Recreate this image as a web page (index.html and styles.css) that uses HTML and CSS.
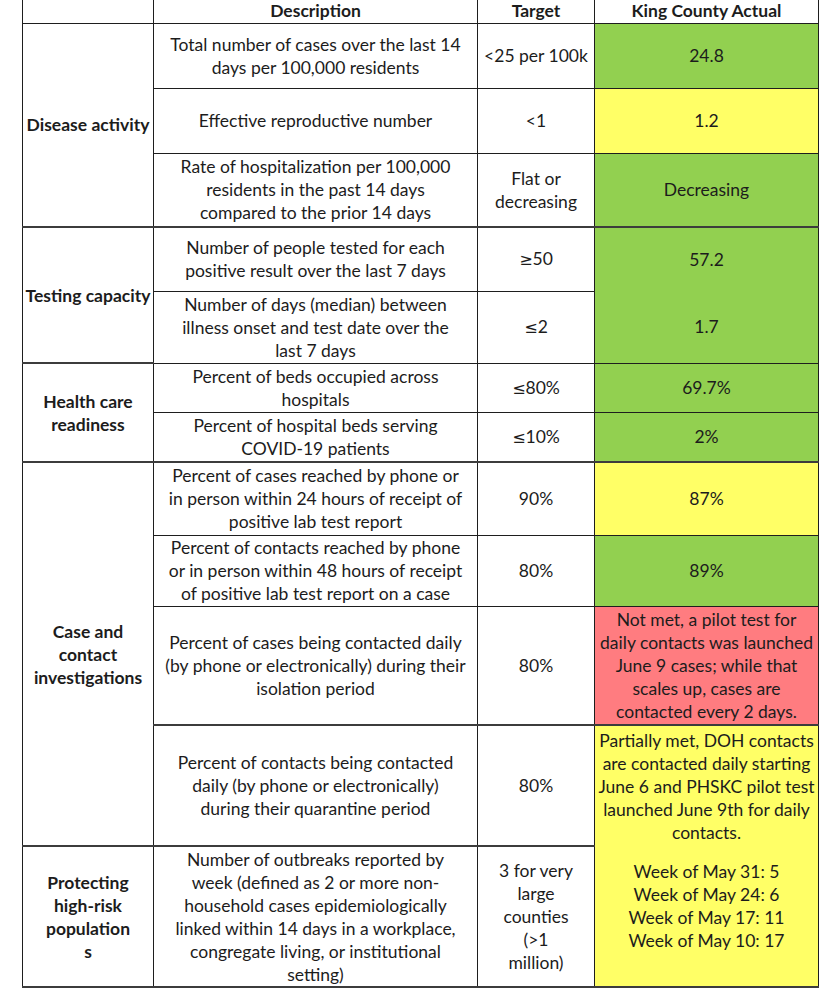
FILE: index.html
```html
<!DOCTYPE html>
<html>
<head>
<meta charset="utf-8">
<link rel="stylesheet" href="styles.css">
</head>
<body>
<table class="grid">
  <colgroup>
    <col class="c1"><col class="c2"><col class="c3"><col class="c4">
  </colgroup>
  <tr class="h-head">
    <th class="top"></th>
    <th class="top">Description</th>
    <th class="top">Target</th>
    <th class="top">King County Actual</th>
  </tr>
  <tr class="h65">
    <td class="cat grp" rowspan="3">Disease activity</td>
    <td>Total number of cases over the last 14<br>days per 100,000 residents</td>
    <td>&lt;25 per 100k</td>
    <td class="green">24.8</td>
  </tr>
  <tr class="h65">
    <td>Effective reproductive number</td>
    <td>&lt;1</td>
    <td class="yellow">1.2</td>
  </tr>
  <tr class="h74 grp">
    <td>Rate of hospitalization per 100,000<br>residents in the past 14 days<br>compared to the prior 14 days</td>
    <td>Flat or<br>decreasing</td>
    <td class="green">Decreasing</td>
  </tr>
  <tr class="h64">
    <td class="cat grp" rowspan="2">Testing capacity</td>
    <td>Number of people tested for each<br>positive result over the last 7 days</td>
    <td><span class="sym">&ge;</span>50</td>
    <td class="green nob">57.2</td>
  </tr>
  <tr class="h72">
    <td>Number of days (median) between<br>illness onset and test date over the<br>last 7 days</td>
    <td><span class="sym">&le;</span>2</td>
    <td class="green">1.7</td>
  </tr>
  <tr class="h49">
    <td class="cat grp" rowspan="2">Health care<br>readiness</td>
    <td>Percent of beds occupied across<br>hospitals</td>
    <td><span class="sym">&le;</span>80%</td>
    <td class="green">69.7%</td>
  </tr>
  <tr class="h50 grp">
    <td>Percent of hospital beds serving<br>COVID-19 patients</td>
    <td><span class="sym">&le;</span>10%</td>
    <td class="green">2%</td>
  </tr>
  <tr class="h73">
    <td class="cat grp" rowspan="4">Case and<br>contact<br>investigations</td>
    <td>Percent of cases reached by phone or<br>in person within 24 hours of receipt of<br>positive lab test report</td>
    <td>90%</td>
    <td class="yellow">87%</td>
  </tr>
  <tr class="h71">
    <td>Percent of contacts reached by phone<br>or in person within 48 hours of receipt<br>of positive lab test report on a case</td>
    <td>80%</td>
    <td class="green">89%</td>
  </tr>
  <tr class="h119 grp">
    <td>Percent of cases being contacted daily<br>(by phone or electronically) during their<br>isolation period</td>
    <td>80%</td>
    <td class="red">Not met, a pilot test for<br>daily contacts was launched<br>June 9 cases; while that<br>scales up, cases are<br>contacted every 2 days.</td>
  </tr>
  <tr class="h121 grp">
    <td>Percent of contacts being contacted<br>daily (by phone or electronically)<br>during their quarantine period</td>
    <td>80%</td>
    <td class="yellow merged grp" rowspan="2">
      <div class="note">Partially met, DOH contacts<br>are contacted daily starting<br>June 6 and PHSKC pilot test<br>launched June 9th for daily<br>contacts.</div>
      <div class="weeks">Week of May 31: 5<br>Week of May 24: 6<br>Week of May 17: 11<br>Week of May 10: 17</div>
    </td>
  </tr>
  <tr class="h141 grp">
    <td class="cat">Protecting<br>high-risk<br>population<br>s</td>
    <td>Number of outbreaks reported by<br>week (defined as 2 or more non-<br>household cases epidemiologically<br>linked within 14 days in a workplace,<br>congregate living, or institutional<br>setting)</td>
    <td>3 for very<br>large<br>counties<br>(&gt;1<br>million)</td>
  </tr>
</table>
</body>
</html>
```
FILE: styles.css
```css
html, body {
  margin: 0;
  padding: 0;
  background: #ffffff;
}

.grid {
  margin-left: 22px;
  border-collapse: collapse;
  table-layout: fixed;
  width: 797px;
  font-family: "Lato", "Open Sans", sans-serif;
  font-size: 17.5px;
  line-height: 23px;
  color: #1c1c1c;
}

.c1 { width: 131px; }
.c2 { width: 324px; }
.c3 { width: 117px; }
.c4 { width: 224px; }

.grid th,
.grid td {
  border: 1px solid #1e1e1e;
  padding: 0 1px;
  text-align: center;
  vertical-align: middle;
  white-space: nowrap;
}

.grid th {
  font-weight: 700;
  border-top: none;
  line-height: 21px;
  padding: 0 1px;
  vertical-align: top;
}

.grid .cat {
  font-weight: 700;
}

.sym {
  font-family: "DejaVu Sans", sans-serif;
  font-size: 16px;
}

.grid tr.grp td,
.grid td.grp {
  border-bottom: 2px solid #3c3c3c;
}

.grid td.nob {
  border-bottom-style: hidden;
}

.h-head { height: 23px; }
.h65 { height: 65px; }
.h74 { height: 74px; }
.h64 { height: 64px; }
.h72 { height: 72px; }
.h49 { height: 49px; }
.h50 { height: 50px; }
.h73 { height: 73px; }
.h71 { height: 71px; }
.h119 { height: 119px; }
.h121 { height: 121px; }
.h141 { height: 141px; }

.green { background: #92d050; }
.yellow { background: #ffff66; }
.red { background: #ff7c80; }

.grid td.merged {
  vertical-align: top;
  padding-top: 3px;
}

.weeks {
  margin-top: 16px;
}
```
